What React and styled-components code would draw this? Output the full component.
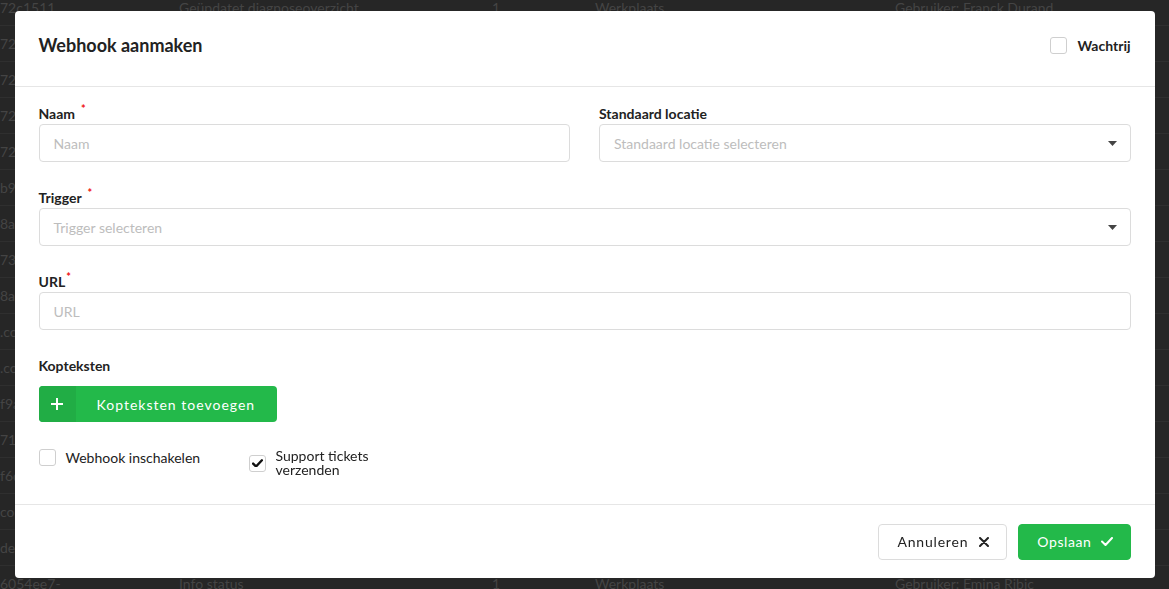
import React from 'react';
import styled, { createGlobalStyle } from 'styled-components';

const GlobalStyle = createGlobalStyle`
  html, body {
    margin: 0;
    padding: 0;
    background: #262626;
    font-family: Lato, "Open Sans", sans-serif;
  }
  * { box-sizing: border-box; }
`;

const Page = styled.div`
  width: 1169px;
  height: 589px;
  overflow: hidden;
  background: #262626;
`;

const Table = styled.div`
  margin-top: -10px;
`;

const TableRow = styled.div`
  display: grid;
  grid-template-columns: 179px 313px 103px 300px 1fr;
  align-items: center;
  height: 36px;
  border-bottom: 1px solid #2f2f2f;
  font-size: 14px;
  color: #444;
  white-space: nowrap;
  overflow: hidden;
`;

const Overlay = styled.div`
  position: fixed;
  inset: 0;
  display: flex;
  align-items: center;
  justify-content: center;
`;

const Modal = styled.div`
  width: 1140px;
  height: 567px;
  background: #fff;
  border-radius: 4px;
  display: flex;
  flex-direction: column;
  color: #222;
`;

const Header = styled.div`
  height: 76px;
  flex: none;
  display: flex;
  align-items: center;
  justify-content: space-between;
  padding: 0 24px 7px;
  border-bottom: 1px solid #e6e6e6;
`;

const Title = styled.h2`
  margin: 0;
  font-size: 18px;
  font-weight: 700;
  color: #222;
`;

const Body = styled.div`
  padding: 18px 24px 27px;
  display: grid;
  grid-template-columns: 1fr 1fr;
  column-gap: 29px;
  row-gap: 27px;
`;

const Field = styled.div`
  display: flex;
  flex-direction: column;
  grid-column: ${(p) => (p.$full ? '1 / -1' : 'auto')};
`;

const Label = styled.label`
  font-size: 14px;
  line-height: 17px;
  height: 17px;
  font-weight: 700;
  color: #222;
  margin-bottom: ${(p) => p.$gap || 2}px;
`;

const Required = styled.span`
  color: #f01010;
  font-size: 11px;
  line-height: 11px;
  vertical-align: top;
  position: relative;
  top: -2px;
  margin-left: ${(p) => (p.$tight ? 1 : 6)}px;
`;

const Input = styled.input`
  height: 38px;
  width: 100%;
  border: 1px solid #dcdcdc;
  border-radius: 4px;
  padding: 0 14px;
  font-family: inherit;
  font-size: 14px;
  color: #222;
  outline: none;
  &::placeholder { color: #bdbdbd; }
`;

const Select = styled.div`
  height: 38px;
  border: 1px solid #dcdcdc;
  border-radius: 4px;
  padding: 0 13px 0 14px;
  display: flex;
  align-items: center;
  justify-content: space-between;
  font-size: 14px;
  color: #bdbdbd;
`;

const AddButton = styled.button`
  align-self: flex-start;
  display: flex;
  height: 36px;
  padding: 0;
  border: none;
  border-radius: 4px;
  overflow: hidden;
  background: #23b94a;
  color: #fff;
  font-family: inherit;
  font-size: 14px;
  letter-spacing: 1px;
  cursor: pointer;
`;

const AddIcon = styled.span`
  width: 37px;
  display: flex;
  align-items: center;
  justify-content: center;
  background: #21ad45;
`;

const AddText = styled.span`
  display: flex;
  align-items: center;
  padding: 0 22px 0 21px;
`;

const CheckRow = styled.div`
  grid-column: 1 / -1;
  display: flex;
  align-items: flex-start;
`;

const CheckGroup = styled.label`
  display: flex;
  align-items: center;
  gap: 10px;
  width: ${(p) => p.$width || 'auto'};
  font-size: 14px;
  font-weight: ${(p) => (p.$bold ? 700 : 400)};
  color: #222;
`;

const CheckText = styled.span`
  line-height: ${(p) => (p.$wrap ? '14px' : '17px')};
  max-width: ${(p) => (p.$wrap ? '110px' : 'none')};
`;

const Box = styled.span`
  width: 17px;
  height: 17px;
  flex: none;
  border: 1px solid #cfcfcf;
  border-radius: 3px;
  background: #fff;
  display: flex;
  align-items: center;
  justify-content: center;
`;

const Footer = styled.div`
  margin-top: auto;
  border-top: 1px solid #e6e6e6;
  padding: 19px 24px 18px;
  display: flex;
  justify-content: flex-end;
  gap: 11px;
`;

const FooterButton = styled.button`
  height: 36px;
  display: flex;
  align-items: center;
  gap: ${(p) => (p.$primary ? 9 : 11)}px;
  padding: 0 17px 1px 18px;
  border-radius: 4px;
  border: 1px solid ${(p) => (p.$primary ? '#23b94a' : '#dcdcdc')};
  background: ${(p) => (p.$primary ? '#23b94a' : '#fff')};
  color: ${(p) => (p.$primary ? '#fff' : '#222')};
  font-family: inherit;
  font-size: 14px;
  letter-spacing: ${(p) => (p.$primary ? 0.6 : 0.8)}px;
  cursor: pointer;
`;

const rows = [
  ['72c1511', 'Geüpdatet diagnoseoverzicht', '1', 'Werkplaats', 'Gebruiker: Franck Durand'],
  ['72c4b09', 'Geüpdatet diagnoseoverzicht', '1', 'Werkplaats', 'Gebruiker: Franck Durand'],
  ['72c3f81', 'Info status', '1', 'Werkplaats', 'Gebruiker: Franck Durand'],
  ['72c9e02', 'Info status', '1', 'Werkplaats', 'Gebruiker: Franck Durand'],
  ['72c0a17', 'Info status', '1', 'Werkplaats', 'Gebruiker: Franck Durand'],
  ['b9d14e0', 'Info status', '1', 'Werkplaats', 'Gebruiker: Emina Ribic'],
  ['8a31fc2', 'Info status', '1', 'Werkplaats', 'Gebruiker: Emina Ribic'],
  ['73e08b4', 'Info status', '1', 'Werkplaats', 'Gebruiker: Emina Ribic'],
  ['8a2c6d1', 'Info status', '1', 'Werkplaats', 'Gebruiker: Emina Ribic'],
  ['.com', 'Info status', '1', 'Werkplaats', 'Gebruiker: Emina Ribic'],
  ['.com', 'Info status', '1', 'Werkplaats', 'Gebruiker: Emina Ribic'],
  ['f9a0c33', 'Info status', '1', 'Werkplaats', 'Gebruiker: Emina Ribic'],
  ['718be5a', 'Info status', '1', 'Werkplaats', 'Gebruiker: Emina Ribic'],
  ['f6d2a90', 'Info status', '1', 'Werkplaats', 'Gebruiker: Emina Ribic'],
  ['com', 'Info status', '1', 'Werkplaats', 'Gebruiker: Emina Ribic'],
  ['dec41b7', 'Info status', '1', 'Werkplaats', 'Gebruiker: Emina Ribic'],
  ['6054ee7-', 'Info status', '1', 'Werkplaats', 'Gebruiker: Emina Ribic'],
];

const Caret = () => (
  <svg width="9" height="5" viewBox="0 0 9 5">
    <path d="M0 0 H9 L4.5 5 Z" fill="#444" />
  </svg>
);

const Tick = ({ color = '#111', size = 11 }) => (
  <svg width={size} height={size * 0.8} viewBox="0 0 12 9.6">
    <path d="M1.2 5 L4.4 8.2 L10.8 1.4" fill="none" stroke={color} strokeWidth="2.6" strokeLinecap="round" strokeLinejoin="round" />
  </svg>
);

const Checkbox = ({ checked }) => (
  <Box>{checked && <Tick />}</Box>
);

export default function App() {
  return (
    <Page>
      <GlobalStyle />
      <Table>
        {rows.map((r, i) => (
          <TableRow key={i}>
            {r.map((c, j) => (
              <span key={j}>{c}</span>
            ))}
          </TableRow>
        ))}
      </Table>
      <Overlay>
        <Modal>
          <Header>
            <Title>Webhook aanmaken</Title>
            <CheckGroup $bold>
              <Checkbox />
              <CheckText>Wachtrij</CheckText>
            </CheckGroup>
          </Header>
          <Body>
            <Field>
              <Label>Naam<Required>*</Required></Label>
              <Input placeholder="Naam" />
            </Field>
            <Field>
              <Label>Standaard locatie</Label>
              <Select>Standaard locatie selecteren<Caret /></Select>
            </Field>
            <Field $full>
              <Label>Trigger<Required>*</Required></Label>
              <Select>Trigger selecteren<Caret /></Select>
            </Field>
            <Field $full>
              <Label>URL<Required $tight>*</Required></Label>
              <Input placeholder="URL" />
            </Field>
            <Field $full>
              <Label $gap={12}>Kopteksten</Label>
              <AddButton>
                <AddIcon>
                  <svg width="12" height="12" viewBox="0 0 12 12">
                    <path d="M6 0 V12 M0 6 H12" stroke="#fff" strokeWidth="2" />
                  </svg>
                </AddIcon>
                <AddText>Kopteksten toevoegen</AddText>
              </AddButton>
            </Field>
            <CheckRow>
              <CheckGroup $width="210px">
                <Checkbox />
                <CheckText>Webhook inschakelen</CheckText>
              </CheckGroup>
              <CheckGroup>
                <Checkbox checked />
                <CheckText $wrap>Support tickets verzenden</CheckText>
              </CheckGroup>
            </CheckRow>
          </Body>
          <Footer>
            <FooterButton>
              Annuleren
              <svg width="10" height="10" viewBox="0 0 10 10">
                <path d="M1 1 L9 9 M9 1 L1 9" stroke="#222" strokeWidth="2" strokeLinecap="round" />
              </svg>
            </FooterButton>
            <FooterButton $primary>
              Opslaan
              <svg width="12" height="9" viewBox="0 0 12 9">
                <path d="M1 4.5 L4.5 8 L11 1" fill="none" stroke="#fff" strokeWidth="2" strokeLinecap="round" strokeLinejoin="round" />
              </svg>
            </FooterButton>
          </Footer>
        </Modal>
      </Overlay>
    </Page>
  );
}
